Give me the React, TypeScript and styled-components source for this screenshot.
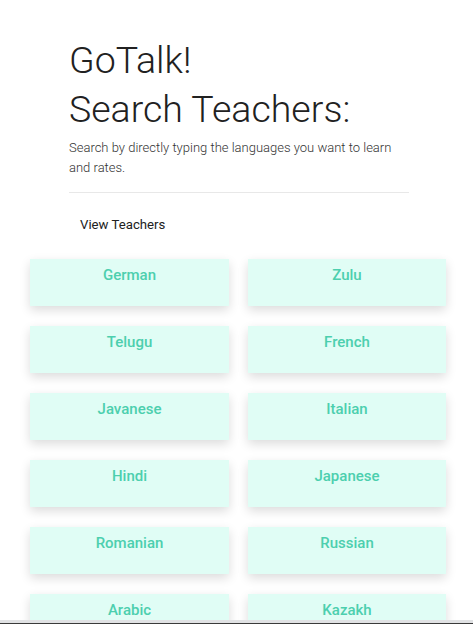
import React from "react";
import styled, { createGlobalStyle } from "styled-components";

const Global = createGlobalStyle`
  html, body { margin: 0; padding: 0; background: #fff; }
  body { font-family: Roboto, "Noto Sans", sans-serif; overflow: hidden; }
`;

const Page = styled.div`
  display: flex;
  flex-direction: column;
  padding-top: 36px;
`;

const Header = styled.header`
  margin: 0 64px 0 69px;
  display: flex;
  flex-direction: column;
`;

const Title = styled.h1`
  margin: 0;
  font-size: 37.5px;
  font-weight: 300;
  line-height: 49px;
  color: #212121;
`;

const Lead = styled.p`
  margin: 4px 0 0;
  font-size: 13px;
  font-weight: 300;
  line-height: 20px;
  color: #333;
`;

const Divider = styled.hr`
  margin: 14px 0 0;
  border: 0;
  border-top: 1px solid #e8e8e8;
`;

const ViewLink = styled.div`
  margin: 23px 0 0 80px;
  font-size: 13.2px;
  font-weight: 400;
  color: #212121;
  line-height: 18px;
`;

const Grid = styled.div`
  margin: 25px 0 0 30px;
  display: grid;
  grid-template-columns: 199px 198px;
  column-gap: 19px;
  row-gap: 20px;
`;

const Card = styled.div`
  height: 47px;
  background: #e0fdf5;
  box-shadow: 0 4px 10px rgba(0, 0, 0, 0.14);
  display: flex;
  justify-content: center;
  align-items: flex-start;
  padding-top: 7px;
  box-sizing: border-box;
`;

const CardLabel = styled.span`
  font-size: 15px;
  font-weight: 500;
  color: #4ccfae;
  line-height: 18px;
`;

const BottomBar = styled.div`
  position: fixed;
  left: 0;
  right: 0;
  bottom: 0;
  height: 4px;
  background: #e1e2e4;
  border-bottom: 1px solid #3a3a3a;
  box-sizing: border-box;
`;

const languages = [
  "German", "Zulu",
  "Telugu", "French",
  "Javanese", "Italian",
  "Hindi", "Japanese",
  "Romanian", "Russian",
  "Arabic", "Kazakh",
];

export default function App() {
  return (
    <>
      <Global />
      <Page>
        <Header>
          <Title>GoTalk!</Title>
          <Title>Search Teachers:</Title>
          <Lead>
            Search by directly typing the languages you want to learn and rates.
          </Lead>
          <Divider />
        </Header>
        <ViewLink>View Teachers</ViewLink>
        <Grid>
          {languages.map((l) => (
            <Card key={l}>
              <CardLabel>{l}</CardLabel>
            </Card>
          ))}
        </Grid>
      </Page>
      <BottomBar />
    </>
  );
}
